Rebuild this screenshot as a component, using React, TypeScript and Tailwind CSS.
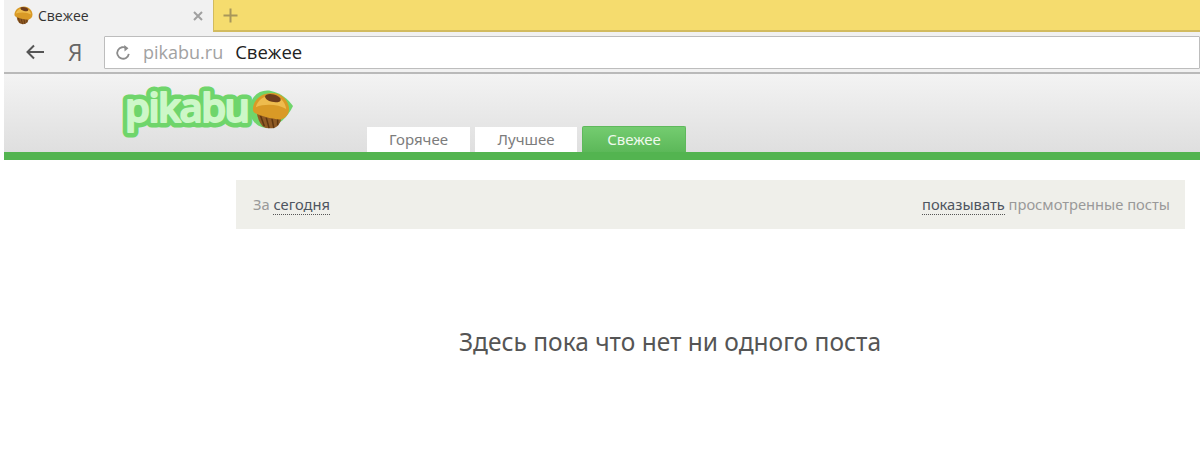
import React from "react";

function Muffin({ size }: { size: number }) {
  return (
    <svg width={size} height={size} viewBox="0 0 40 40">
      <path d="M5 21 L31 27 Q30 34 25 37 Q17 40 11 36 Q6 30 5 21 Z" fill="#8f5a24" />
      <path d="M9 25 L13 36 M15 27 L18 38 M21 28 L23 38 M27 28 L27 35" stroke="#5f3610" strokeWidth="1.6" fill="none" />
      <path d="M1 17 C2 7 11 1 21 1 C31 1 39 9 39 18 C39 24 35 28 30 29 C20 28 8 25 3 22 C1 21 1 19 1 17 Z" fill="#d99a26" />
      <path d="M4 16 C6 8 13 4 21 4 C29 4 35 10 36 18 C28 13 14 12 4 16 Z" fill="#eebc4e" />
      <ellipse cx="22" cy="6.5" rx="8.5" ry="4" transform="rotate(14 22 6.5)" fill="#6e3d1c" />
    </svg>
  );
}

function Logo() {
  const txt = { fontFamily: "'Open Sans', sans-serif", fontWeight: 600, fontSize: 40 };
  return (
    <svg width="180" height="66" viewBox="0 0 180 66" className="block">
      <path d="M134 28 C135 16 145 10 155 12 C165 14 172 20 177 27 C172 38 162 47 152 49 C140 49 133 40 134 28 Z" fill="#6fd56b" />
      <text x="9" y="43" textLength="125" lengthAdjust="spacing" style={txt} fill="#6fd56b" stroke="#6fd56b" strokeWidth="11" strokeLinejoin="round">pikabu</text>
      <text x="9" y="43" textLength="125" lengthAdjust="spacing" style={txt} fill="#cdf7c8" stroke="#cdf7c8" strokeWidth="2" strokeLinejoin="round">pikabu</text>
      <g transform="translate(136 13)">
        <Muffin size={38} />
      </g>
    </svg>
  );
}

function Tab({ label, width, active }: { label: string; width: string; active?: boolean }) {
  return active ? (
    <div className={`${width} h-[26px] flex items-center justify-center rounded-t-[2px] border-t border-x border-[#5fb95c] bg-gradient-to-b from-[#74cc70] to-[#5cb859] text-[15px] text-[#eef9ec]`}>
      {label}
    </div>
  ) : (
    <div className={`${width} h-[25px] flex items-center justify-center bg-white text-[15px] text-[#7c7c7c]`}>
      {label}
    </div>
  );
}

export default function App() {
  return (
    <div className="w-[1200px] h-[451px] overflow-hidden bg-white flex flex-col font-['Noto_Sans','Open_Sans',sans-serif]">
      <div className="ml-[4px] flex flex-col bg-[#f1f1f1]">
        <div className="h-[32px] flex">
          <div className="w-[209px] flex items-center pl-[10px] pr-[10px] pb-[1px]">
            <Muffin size={19} />
            <span className="ml-[5px] text-[14px] text-[#333] font-['Open_Sans',sans-serif]">Свежее</span>
            <svg width="10" height="10" viewBox="0 0 10 10" className="ml-auto">
              <path d="M1 1 L9 9 M9 1 L1 9" stroke="#a0a0a0" strokeWidth="2" />
            </svg>
          </div>
          <div className="flex-1 bg-[#f5dc6e] border-b-2 border-l border-[#d2bb5f] flex items-center pl-[9px]">
            <svg width="15" height="15" viewBox="0 0 15 15">
              <path d="M7.5 0.5 V14.5 M0.5 7.5 H14.5" stroke="#a8965a" strokeWidth="2" />
            </svg>
          </div>
        </div>
        <div className="h-[42px] flex items-center border-b-2 border-[#b9b9b9]">
          <svg width="20" height="16" viewBox="0 0 20 16" className="ml-[21px]">
            <path d="M19 8 H3 M9 1.5 L2.5 8 L9 14.5" stroke="#555" strokeWidth="2" fill="none" />
          </svg>
          <span className="ml-[23px] w-[14px] text-[23px] leading-none text-[#666] font-['Open_Sans',sans-serif]">Я</span>
          <div className="ml-[22px] flex-1 h-[33px] bg-white border border-[#bdbdbd] rounded-[1px] flex items-center pl-[10px] font-['Open_Sans',sans-serif]">
            <svg width="17" height="17" viewBox="0 0 24 24" fill="none" stroke="#8c8c8c" strokeWidth="2.6">
              <path d="M19.5 14 A8.2 8.2 0 1 1 16.5 6.2" />
              <path d="M13 1.5 L19 6 L13.5 10.5 Z" fill="#8c8c8c" stroke="none" />
            </svg>
            <span className="ml-[11px] text-[18px] text-[#a2a2a2]">pikabu.ru</span>
            <span className="ml-[12px] text-[18.5px] text-[#222]">Свежее</span>
          </div>
        </div>
      </div>
      <div className="ml-[4px] h-[86px] flex items-end bg-gradient-to-b from-[#f3f3f3] to-[#dfdfdf] border-b-[8px] border-[#53b450] relative">
        <div className="absolute left-[112px] top-[5px]">
          <Logo />
        </div>
        <div className="ml-[363px] flex items-end gap-[5px]">
          <Tab label="Горячее" width="w-[103px]" />
          <Tab label="Лучшее" width="w-[102px]" />
          <Tab label="Свежее" width="w-[104px]" active />
        </div>
      </div>
      <div className="ml-[236px] mr-[15px] mt-[20px] h-[49px] bg-[#efefea] flex items-center justify-between pl-[17px] pr-[15px] text-[14.7px] text-[#999]">
        <div>
          За <span className="text-[#4e5560] border-b border-dotted border-[#555]">сегодня</span>
        </div>
        <div>
          <span className="text-[#4e5560] border-b border-dotted border-[#555]">показывать</span> просмотренные посты
        </div>
      </div>
      <div className="ml-[236px] mr-[96px] mt-[97px] text-center text-[24.5px] leading-[32px] text-[#555]">
        Здесь пока что нет ни одного поста
      </div>
    </div>
  );
}
